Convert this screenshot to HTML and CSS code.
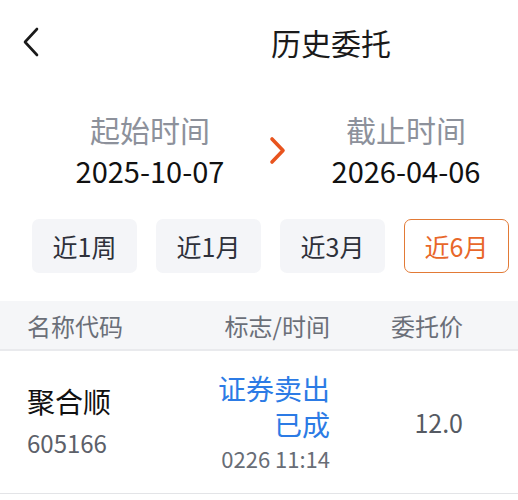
FILE: index.html
```html
<!DOCTYPE html>
<html lang="zh-CN">
<head>
  <meta charset="UTF-8">
  <meta name="viewport" content="width=device-width, initial-scale=1.0">
  <title>历史委托</title>
  <link rel="stylesheet" href="styles.css">
</head>
<body>
  <div class="page">
    <div class="header">
      <div class="back">
        <svg width="20" height="30" viewBox="0 0 20 30">
          <path d="M15 2 L3 15 L15 28" fill="none" stroke="#1a1a1a" stroke-width="2.6" stroke-linecap="round" stroke-linejoin="round"/>
        </svg>
      </div>
      <div class="title">历史委托</div>
    </div>

    <div class="range">
      <div class="range-item">
        <div class="range-label">起始时间</div>
        <div class="range-date">2025-10-07</div>
      </div>
      <div class="range-arrow">
        <svg width="18" height="30" viewBox="0 0 18 30">
          <path d="M3 3 L14 14.5 L3 26" fill="none" stroke="#e8541e" stroke-width="3.6" stroke-linecap="round" stroke-linejoin="round"/>
        </svg>
      </div>
      <div class="range-item">
        <div class="range-label">截止时间</div>
        <div class="range-date">2026-04-06</div>
      </div>
    </div>

    <div class="periods">
      <div class="period">近1周</div>
      <div class="period">近1月</div>
      <div class="period">近3月</div>
      <div class="period active">近6月</div>
    </div>

    <div class="table-head">
      <div>名称代码</div>
      <div class="right">标志/时间</div>
      <div class="right">委托价</div>
    </div>

    <div class="table-row">
      <div class="stock">
        <div class="stock-name">聚合顺</div>
        <div class="stock-code">605166</div>
      </div>
      <div class="flag right">
        <div class="flag-text">证券卖出</div>
        <div class="flag-text">已成</div>
        <div class="flag-time">0226 11:14</div>
      </div>
      <div class="price right">12.0</div>
    </div>
  </div>
</body>
</html>
```

FILE: styles.css
```css
/* 历史委托 */
body {
  margin: 0;
  background-color: #fff;
  font-family: "Noto Sans CJK SC", "Noto Sans", sans-serif;
  color: #111;
}
.page {
  width: 518px;
}
.header {
  display: flex;
  align-items: center;
  height: 84px;
}
.back {
  width: 20px;
  height: 30px;
  margin-left: 22px;
}
.title {
  flex: 1;
  margin-left: 102px;
  text-align: center;
  font-size: 30px;
  line-height: 40px;
  color: #1a1a1a;
}
.range {
  display: flex;
  align-items: center;
  padding: 25px 0 0 50px;
}
.range-item {
  width: 200px;
  text-align: center;
}
.range-label {
  font-size: 30px;
  line-height: 40px;
  color: #8d919b;
}
.range-date {
  font-size: 29px;
  line-height: 42px;
  color: #111;
}
.range-arrow {
  width: 56px;
  display: flex;
  justify-content: center;
  padding-top: 2px;
}
.periods {
  display: flex;
  gap: 19px;
  padding: 28px 0 0 32px;
}
.period {
  width: 105px;
  height: 54px;
  box-sizing: border-box;
  display: flex;
  align-items: center;
  justify-content: center;
  background-color: #f4f5f8;
  border-radius: 7px;
  font-size: 25px;
  color: #2e313a;
}
.period.active {
  background-color: #fff;
  border: 1.5px solid #e27a36;
  color: #e8672a;
}
.table-head,
.table-row {
  display: grid;
  grid-template-columns: 1fr 140px 133px;
  padding: 0 55px 0 27px;
}
.table-head {
  margin-top: 28px;
  height: 48px;
  align-items: center;
  background-color: #f5f6f8;
  border-bottom: 2px solid #e9eaed;
  font-size: 24px;
  color: #6b6f78;
}
.right {
  text-align: right;
}
.table-row {
  height: 142px;
  align-items: center;
  border-bottom: 1px solid #e3e4e7;
}
.stock-name {
  font-size: 28px;
  line-height: 36px;
  color: #111;
}
.stock-code {
  margin-top: 6px;
  font-size: 24px;
  line-height: 36px;
  color: #5c6069;
}
.flag-text {
  font-size: 28px;
  line-height: 36px;
  color: #2c7be5;
}
.flag-time {
  font-size: 22px;
  line-height: 32px;
  color: #686d76;
}
.price {
  font-size: 25px;
  color: #555a63;
}
```
